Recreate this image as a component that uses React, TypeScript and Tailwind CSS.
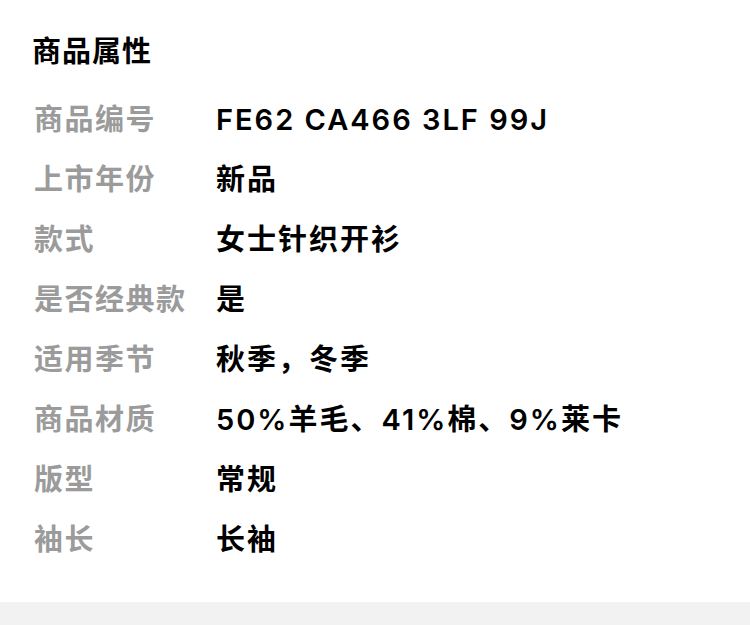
const rows: [string, string][] = [
  ['商品编号', 'FE62 CA466 3LF 99J'],
  ['上市年份', '新品'],
  ['款式', '女士针织开衫'],
  ['是否经典款', '是'],
  ['适用季节', '秋季，冬季'],
  ['商品材质', '50%羊毛、41%棉、9%莱卡'],
  ['版型', '常规'],
  ['袖长', '长袖'],
];

export default function App() {
  return (
    <div className="min-h-[625px] bg-white font-['Inter','Noto_Sans_CJK_SC',sans-serif]">
      <div className="px-8 pt-[34px] pb-8">
        <h2 className="text-[29px] leading-9 font-bold text-black tracking-[1px]">商品属性</h2>
        <div className="mt-5">
          {rows.map(([label, value]) => (
            <div key={label} className="flex items-center h-[60px]">
              <div className="w-[184px] pl-[2px] text-[29px] font-bold text-[#9b9b9b] tracking-[1.5px]">{label}</div>
              <div className="text-[29px] font-semibold text-black tracking-[2px]">{value}</div>
            </div>
          ))}
        </div>
      </div>
      <div className="h-[23px] bg-[#f2f2f2]" />
    </div>
  );
}
